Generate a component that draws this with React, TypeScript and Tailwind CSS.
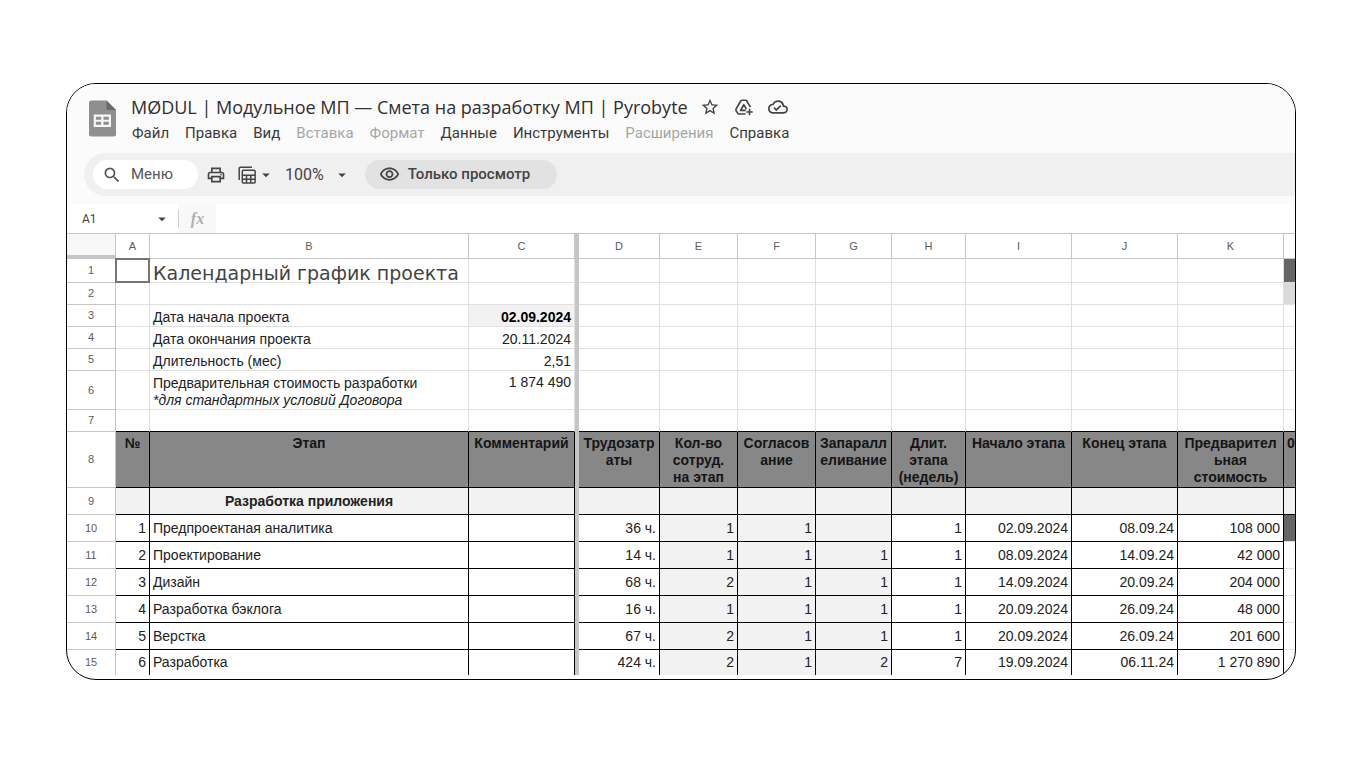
import type { ReactNode } from "react";
import {
  MdArrowDropDown,
  MdOutlineCloudDone,
  MdOutlinePrint,
  MdOutlineVisibility,
  MdSearch,
  MdStarBorder,
} from "react-icons/md";

const menus = [
  { label: "Файл" },
  { label: "Правка" },
  { label: "Вид" },
  { label: "Вставка", disabled: true },
  { label: "Формат", disabled: true },
  { label: "Данные" },
  { label: "Инструменты" },
  { label: "Расширения", disabled: true },
  { label: "Справка" },
];

const columns = ["A", "B", "C", "", "D", "E", "F", "G", "H", "I", "J", "K", ""];

const headings = [
  "№",
  "Этап",
  "Комментарий",
  null,
  "Трудозатр\nаты",
  "Кол-во\nсотруд.\nна этап",
  "Согласов\nание",
  "Запаралл\nеливание",
  "Длит.\nэтапа\n(недель)",
  "Начало этапа",
  "Конец этапа",
  "Предварител\nьная\nстоимость",
];

const stages = [
  ["1", "Предпроектаная аналитика", "", null, "36 ч.", "1", "1", "", "1", "02.09.2024", "08.09.24", "108 000"],
  ["2", "Проектирование", "", null, "14 ч.", "1", "1", "1", "1", "08.09.2024", "14.09.24", "42 000"],
  ["3", "Дизайн", "", null, "68 ч.", "2", "1", "1", "1", "14.09.2024", "20.09.24", "204 000"],
  ["4", "Разработка бэклога", "", null, "16 ч.", "1", "1", "1", "1", "20.09.2024", "26.09.24", "48 000"],
  ["5", "Верстка", "", null, "67 ч.", "2", "1", "1", "1", "20.09.2024", "26.09.24", "201 600"],
  ["6", "Разработка", "", null, "424 ч.", "2", "1", "2", "7", "19.09.2024", "06.11.24", "1 270 890"],
];

function SheetsLogo() {
  return (
    <svg viewBox="0 0 27 37" className="h-[37px] w-[27px] shrink-0" aria-hidden="true">
      <path d="M2.500 0.500H17.500L27 10V34a2.500 2.500 0 0 1-2.500 2.500h-22A2.500 2.500 0 0 1 0 34V3A2.500 2.500 0 0 1 2.500 0.500z" fill="#8f8f8f" />
      <path d="M17.500 0.500 27 10h-9.500z" fill="#6a6a6a" />
      <path d="M4.700 14.500h17.300v12.500H4.700z" fill="#f6f6f6" />
      <path d="M6.900 16.800h5.300v2.900H6.900zM14.500 16.800h5.300v2.900h-5.300zM6.900 21.800h5.300v2.900H6.900zM14.500 21.800h5.300v2.900h-5.300z" fill="#8f8f8f" />
    </svg>
  );
}

function FilterViewIcon() {
  return (
    <svg viewBox="0 0 18 18" className="size-[18px]" fill="none" stroke="#444" strokeWidth="1.500" aria-hidden="true">
      <path d="M1.200 14V2.400a1.200 1.200 0 0 1 1.200-1.200H14" />
      <rect x="4.300" y="4.300" width="12.800" height="12.800" rx="1" />
      <path d="M4.300 9.300h12.800M4.300 13.200h12.800M8.500 9.300v7.800M12.800 9.300v7.800" />
    </svg>
  );
}

function AddToDriveIcon() {
  return (
    <svg viewBox="0 0 20 20" className="size-5" fill="none" stroke="currentColor" strokeWidth="1.600" strokeLinejoin="round" aria-hidden="true">
      <path d="M11.500 17H5a1.600 1.600 0 0 1-1.400-.8l-1.500-2.600a1.600 1.600 0 0 1 0-1.600L6.700 4a1.600 1.600 0 0 1 1.400-.8h3.300a1.600 1.600 0 0 1 1.400.8l3.600 6.200" />
      <path d="M11.800 13.400H6.500L9.800 7.600l2.600 4.600" />
      <path d="M15.500 11.800v6.400M12.300 15h6.400" />
    </svg>
  );
}

function RowHead({ n, last = false }: { n: number; last?: boolean }) {
  return (
    <th
      scope="row"
      className={`border-r border-[#c6c6c6] text-center align-middle text-[11px] font-normal text-[#5c5c5c] ${last ? "" : "border-b"}`}
    >
      {n}
    </th>
  );
}

function Cell({ className = "", children }: { className?: string; children?: ReactNode }) {
  return <td className={`border-r border-b border-[#e0e0e0] px-[3px] align-bottom ${className}`}>{children}</td>;
}

function Divider() {
  return <td className="bg-[#c6c6c6]" />;
}

function Blanks({ last = "", bottom = "" }: { last?: string; bottom?: string }) {
  return (
    <>
      <Divider />
      {["D", "E", "F", "G", "H", "I", "J", "K"].map((c) => (
        <Cell key={c} className={bottom} />
      ))}
      <td className={`border-b border-[#e0e0e0] ${bottom} ${last}`} />
    </>
  );
}

export default function App() {
  return (
    <div className="min-h-screen bg-white pt-[83px] pr-[65px] pb-[86px] pl-[66px] font-['Liberation_Sans',Arial,sans-serif] text-[#222]">
      <main className="overflow-hidden rounded-[30px] border border-black bg-white pb-1">
        <header className="bg-[#fbfbfb] pb-2">
          <div className="flex gap-[15px] pt-[9px] pl-[22px]">
            <div className="pt-[7px]">
              <SheetsLogo />
            </div>
            <div>
              <div className="flex h-[28px] items-center font-['Open_Sans',sans-serif] text-[#2f2f2f]">
                <h1 className="text-lg whitespace-nowrap">MØDUL | Модульное МП — Смета на разработку МП | Pyrobyte</h1>
                <div className="ml-3 flex items-center gap-[14px] text-[#444]">
                  <button aria-label="Добавить в избранное"><MdStarBorder size={20} /></button>
                  <button aria-label="Добавить ярлык на Диск"><AddToDriveIcon /></button>
                  <button aria-label="Статус документа"><MdOutlineCloudDone size={20} /></button>
                </div>
              </div>
              <nav className="flex h-6 items-center gap-4 pl-[1px] font-[Roboto,sans-serif] text-[15px]">
                {menus.map((m) => (
                  <button key={m.label} disabled={m.disabled} className="text-[#3a3a3a] disabled:text-[#a6a6a6]">
                    {m.label}
                  </button>
                ))}
              </nav>
            </div>
          </div>
          <div className="mt-2 ml-[17px] flex h-[43px] items-center rounded-l-full bg-[#f0f0f0] pl-[9px] font-[Roboto,sans-serif] text-[#444]">
            <button className="flex h-[29px] w-[105px] items-center gap-[9px] rounded-full bg-white pl-[9px] text-[15px] text-[#555]">
              <MdSearch size={20} /> Меню
            </button>
            <button aria-label="Печать" className="ml-2"><MdOutlinePrint size={20} /></button>
            <button aria-label="Фильтры" className="ml-3 flex items-center gap-px">
              <FilterViewIcon /> <MdArrowDropDown size={18} />
            </button>
            <button aria-label="Масштаб" className="ml-[10px] flex items-center gap-[9px] text-base">
              100% <MdArrowDropDown size={18} />
            </button>
            <button className="ml-[14px] flex h-[29px] w-[192px] items-center gap-2 rounded-full bg-[#e2e2e2] pl-[14px] text-[15px] font-medium whitespace-nowrap">
              <MdOutlineVisibility size={21} /> Только просмотр
            </button>
          </div>
        </header>
        <div className="flex h-[30px] items-center border-b border-[#c6c6c6] bg-white font-[Roboto,sans-serif]">
          <input aria-label="Имя диапазона" defaultValue="A1" className="w-[86px] bg-transparent pl-[15px] text-xs text-[#444] outline-none" />
          <MdArrowDropDown size={18} className="text-[#444]" />
          <span className="ml-[7px] h-[18px] w-px bg-[#d0d0d0]" />
          <label htmlFor="formula" className="flex h-[29px] w-[37px] items-center justify-center bg-[#f8f8f8] font-['Liberation_Serif',serif] text-base font-bold text-[#b0b0b0] italic">
            fx
          </label>
          <input id="formula" className="h-full min-w-0 flex-1 bg-transparent px-2 text-xs outline-none" />
        </div>
        <table className="w-full table-fixed border-separate border-spacing-0 text-sm leading-[17px]">
          <colgroup>
            <col className="w-[49px]" />
            <col className="w-[34px]" />
            <col className="w-[319px]" />
            <col className="w-[106px]" />
            <col className="w-[4px]" />
            <col className="w-[81px]" />
            <col className="w-[78px]" />
            <col className="w-[78px]" />
            <col className="w-[76px]" />
            <col className="w-[74px]" />
            <col className="w-[106px]" />
            <col className="w-[106px]" />
            <col className="w-[106px]" />
            <col />
          </colgroup>
          <thead>
            <tr className="h-[25px]">
              <th className="border-r border-b-4 border-[#c6c6c6] bg-[#f8f8f8]" />
              {columns.map((c, i) => (
                <th
                  key={i}
                  scope="col"
                  className={`border-b border-[#c6c6c6] text-center text-[11px] font-normal text-[#5c5c5c] ${i === 3 ? "bg-[#c6c6c6]" : i === 12 ? "" : "border-r"}`}
                >
                  {c}
                </th>
              ))}
            </tr>
          </thead>
          <tbody>
            <tr className="h-6">
              <RowHead n={1} />
              <td className="relative border-r border-b border-[#e0e0e0]">
                <div className="absolute -inset-px border-2 border-[#757575]" />
              </td>
              <Cell className="font-['DejaVu_Sans',sans-serif] text-[19px] leading-[18px] whitespace-nowrap text-[#444]">
                Календарный график проекта
              </Cell>
              <Cell />
              <Blanks last="bg-[#666]" />
            </tr>
            <tr className="h-[22px]">
              <RowHead n={2} />
              <Cell />
              <Cell />
              <Cell />
              <Blanks last="bg-[#dadada]" />
            </tr>
            <tr className="h-[22px]">
              <RowHead n={3} />
              <Cell />
              <Cell>Дата начала проекта</Cell>
              <Cell className="bg-[#f2f2f2] text-right font-bold text-black">02.09.2024</Cell>
              <Blanks />
            </tr>
            <tr className="h-[22px]">
              <RowHead n={4} />
              <Cell />
              <Cell>Дата окончания проекта</Cell>
              <Cell className="text-right">20.11.2024</Cell>
              <Blanks />
            </tr>
            <tr className="h-[22px]">
              <RowHead n={5} />
              <Cell />
              <Cell>Длительность (мес)</Cell>
              <Cell className="text-right">2,51</Cell>
              <Blanks />
            </tr>
            <tr className="h-[39px]">
              <RowHead n={6} />
              <Cell />
              <Cell>
                Предварительная стоимость разработки
                <br />
                <em>*для стандартных условий Договора</em>
              </Cell>
              <td className="border-r border-b border-[#e0e0e0] px-[3px] pt-[3px] text-right align-top">1 874 490</td>
              <Blanks />
            </tr>
            <tr className="h-[22px]">
              <RowHead n={7} />
              <Cell className="border-b-black" />
              <Cell className="border-b-black" />
              <Cell className="border-b-black" />
              <Blanks bottom="border-b-black" />
            </tr>
            <tr className="h-[56px]">
              <RowHead n={8} />
              {headings.map((h, i) =>
                h === null ? (
                  <Divider key={i} />
                ) : (
                  <td key={i} className="border-r border-b border-black bg-[#878787] pt-[3px] text-center align-top font-bold whitespace-pre text-[#151515]">
                    {h}
                  </td>
                ),
              )}
              <td className="border-b border-black bg-[#878787] pt-[3px] pl-[3px] align-top font-bold text-[#151515]">0</td>
            </tr>
            <tr className="h-[27px]">
              <RowHead n={9} />
              {headings.map((h, i) =>
                h === null ? (
                  <Divider key={i} />
                ) : (
                  <td key={i} className="border-r border-b border-black bg-[#f2f2f2] text-center align-middle font-bold">
                    {i === 1 ? "Разработка приложения" : ""}
                  </td>
                ),
              )}
              <td className="border-b border-black bg-[#f2f2f2]" />
            </tr>
            {stages.map((row, r) => {
              const last = r === stages.length - 1;
              return (
                <tr key={r} className={last ? "h-[25px]" : "h-[27px]"}>
                  <RowHead n={r + 10} last={last} />
                  {row.map((v, i) =>
                    v === null ? (
                      <Divider key={i} />
                    ) : (
                      <td
                        key={i}
                        className={`border-r border-black px-[3px] align-middle ${last ? "" : "border-b"} ${i === 1 ? "" : "text-right"} ${i >= 5 && i <= 7 ? "bg-[#f2f2f2]" : ""}`}
                      >
                        {v}
                      </td>
                    ),
                  )}
                  <td className={`${last ? "" : "border-b border-[#e0e0e0]"} ${r === 0 ? "bg-[#666]" : ""}`} />
                </tr>
              );
            })}
          </tbody>
        </table>
      </main>
    </div>
  );
}
